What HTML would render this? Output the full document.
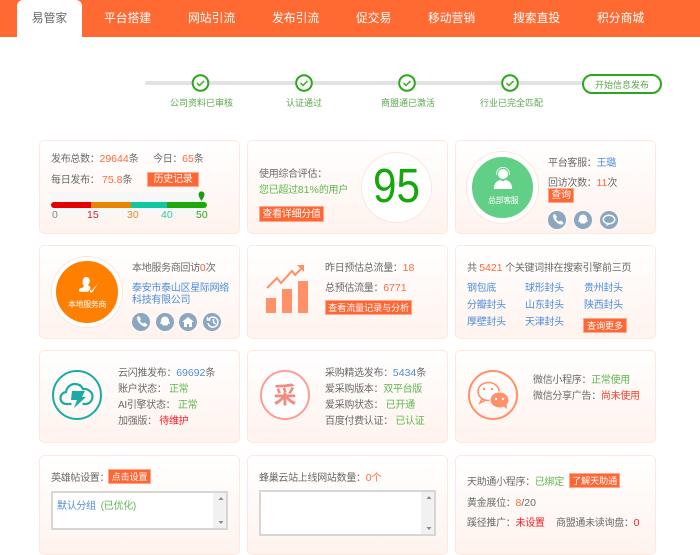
<!DOCTYPE html>
<html lang="zh">
<head>
<meta charset="utf-8">
<style>
html,body{margin:0;padding:0;background:#fff}
body{width:700px;height:536px;overflow:hidden;position:relative;font-family:"Liberation Sans","Noto Sans CJK SC",sans-serif;font-size:10px;letter-spacing:-.3px;color:#6a6a6a}
.t{position:absolute;white-space:nowrap;line-height:14px;margin-top:2px}
.t.n{margin-top:1px}
.n{font-size:10.5px;letter-spacing:0;line-height:1}
.nav{position:absolute;left:0;top:0;width:700px;height:37px;background:#ff6a33}
.tab{position:absolute;top:0;height:37px;line-height:37px;color:#fff;font-size:11.8px;letter-spacing:0;white-space:nowrap}
.act{position:absolute;left:17px;top:0;width:65px;height:37px;background:#fff;border-radius:6px 6px 0 0;color:#666;text-align:center;line-height:37px;font-size:11.8px;letter-spacing:0}
.card{position:absolute;width:201px;box-sizing:border-box;border:1px solid #fbe9e1;border-radius:5px;background:linear-gradient(#fff,#fff3ee)}
.o{color:#ff6a3c}.b{color:#4b8ddc}.g{color:#5db84f}.r{color:#f5202a}
.btn{position:absolute;background:#ff6633;color:#fff;text-align:center;white-space:nowrap;font-size:10px;border:1px solid #ffa98a;box-sizing:border-box;padding-top:1px}
.s9{font-size:9.2px;letter-spacing:-.2px}
.lab{position:absolute;top:97px;color:#5aa84a;font-size:9px;letter-spacing:0;line-height:13px;white-space:nowrap}
.ic{position:absolute;width:18px;height:18px;border-radius:50%;background:#8aa6c1}
svg{position:absolute;display:block}
.sb{position:absolute;box-sizing:border-box;border:2px solid #d6d6d6;background:#fff}
.sb i{position:absolute;right:0;top:0;bottom:0;width:13px;background:#f1f1f1}
</style>
</head>
<body>
<div class="nav"></div>
<div class="act">易管家</div>
<span class="tab" style="left:104px">平台搭建</span>
<span class="tab" style="left:188px">网站引流</span>
<span class="tab" style="left:272px">发布引流</span>
<span class="tab" style="left:356px">促交易</span>
<span class="tab" style="left:428px">移动营销</span>
<span class="tab" style="left:513px">搜索直投</span>
<span class="tab" style="left:597px">积分商城</span>

<div style="position:absolute;left:145px;top:81px;width:450px;height:4px;background:#e2e2e2;border-radius:2px"></div>
<svg width="700" height="110" style="left:0;top:0" viewBox="0 0 700 110">
<g fill="#fff" stroke="#2ba71a" stroke-width="2"><circle cx="200.500" cy="83" r="7.800"/><circle cx="304" cy="83" r="7.800"/><circle cx="407" cy="83" r="7.800"/><circle cx="510" cy="83" r="7.800"/></g>
<g fill="none" stroke="#4fae3a" stroke-width="1.600"><path d="M197 83l2.500 2.500 4.500-4.500"/><path d="M300.500 83l2.500 2.500 4.500-4.500"/><path d="M403.500 83l2.500 2.500 4.500-4.500"/><path d="M506.500 83l2.500 2.500 4.500-4.500"/></g>
<rect x="583" y="75" width="78" height="18" rx="9" fill="#fff" stroke="#2ba71a" stroke-width="2"/>
</svg>
<span class="lab" style="left:170px">公司资料已审核</span>
<span class="lab" style="left:286px">认证通过</span>
<span class="lab" style="left:381px">商盟通已激活</span>
<span class="lab" style="left:480px">行业已完全匹配</span>
<span class="lab" style="left:595px;top:79px">开始信息发布</span>

<!-- row 1 -->
<div class="card" style="left:39px;top:140px;height:94px"></div>
<span class="t" style="left:51px;top:151px">发布总数：<span class="o n">29644</span>条</span>
<span class="t" style="left:153px;top:151px">今日：<span class="o n">65</span>条</span>
<span class="t" style="left:51px;top:172px">每日发布： <span class="o n">75.8</span>条</span>
<div class="btn" style="left:147px;top:172px;width:52px;height:15px;line-height:12px">历史记录</div>
<div style="position:absolute;left:51px;top:192px;width:156px;height:25px;background:#f7f7f7"></div>
<div style="position:absolute;left:51px;top:202px;width:156px;height:6px;border-radius:3px;overflow:hidden;background:linear-gradient(90deg,#e50000 0,#e50000 40px,#e98400 40px,#e98400 80px,#10c8a0 80px,#10c8a0 116px,#1ea80a 116px)"></div>
<svg width="7" height="10" style="left:198px;top:191px" viewBox="0 0 8 12"><path d="M4 12C2 8.500 .5 6.500 .5 4a3.500 3.500 0 0 1 7 0C7.500 6.500 6 8.500 4 12z" fill="#1f9a0c"/></svg>
<span class="t n" style="left:52px;top:207px;line-height:14px;color:#888">0</span>
<span class="t n" style="left:87px;top:207px;line-height:14px;color:#d8202a">15</span>
<span class="t n" style="left:127px;top:207px;line-height:14px;color:#ee8a20">30</span>
<span class="t n" style="left:161px;top:207px;line-height:14px;color:#35c8a5">40</span>
<span class="t n" style="left:196px;top:207px;line-height:14px;color:#2ba71a">50</span>

<div class="card" style="left:247px;top:140px;height:94px"></div>
<span class="t" style="left:259px;top:166px">使用综合评估：</span>
<span class="t g" style="left:259px;top:182px">您已超过<span class="n">81%</span>的用户</span>
<div class="btn" style="left:259px;top:206px;width:65px;height:16px;line-height:13px">查看详细分值</div>
<div style="position:absolute;left:361px;top:152px;width:71px;height:71px;box-sizing:border-box;border:1px solid #fbe6dd;border-radius:50%;background:#fff"></div>
<span class="t" style="left:373px;top:160px;margin-top:0;font-size:48px;letter-spacing:0;line-height:54px;color:#14a80c;transform:scaleX(.88);transform-origin:0 0">95</span>

<div class="card" style="left:455px;top:140px;height:94px"></div>
<div style="position:absolute;left:467px;top:152px;width:71px;height:71px;box-sizing:border-box;border:5px solid #fff;box-shadow:0 0 0 1px #fbe6dd;border-radius:50%;background:#62cf87"></div>
<svg width="20" height="24" style="left:493px;top:167px" viewBox="0 0 24 28"><circle cx="12" cy="8" r="6" fill="#fff"/><path d="M4.500 9V7a7.500 7 0 0 1 15 0v2" fill="none" stroke="#fff" stroke-width="1"/><path d="M1 26c0-8 5-10 8-11l3 2 3-2c3 1 8 3 8 11z" fill="#fff"/></svg>
<span class="t" style="left:488px;top:192px;color:#fff;font-size:8px;letter-spacing:-.4px">总部客服</span>
<span class="t" style="left:548px;top:155px">平台客服：<span class="b">王璐</span></span>
<span class="t" style="left:548px;top:175px">回访次数：<span class="o n">11</span>次</span>
<div class="btn" style="left:548px;top:188px;width:26px;height:15px;line-height:12px">查询</div>
<div class="ic" style="left:548px;top:211px"></div>
<div class="ic" style="left:574px;top:211px"></div>
<div class="ic" style="left:600px;top:211px"></div>
<svg width="80" height="18" style="left:548px;top:211px" viewBox="0 0 80 18" fill="#fff"><path d="M5 4l2-1 2 3-1 1.500c.5 1.500 1.500 2.500 3 3l1.500-1 3 2-1 2c-4 1-10-5-9.500-9.500z"/><path d="M31 3.500c2.500 0 4 2 4 4.500l1 3-1.500-.5c-.5 1-1 1.500-1.500 2h-4c-.5-.5-1-1-1.500-2l-1.500.5 1-3c0-2.500 1.500-4.500 4-4.500z" transform="translate(4 0)"/><path fill-rule="evenodd" d="M61 3.500c3.500 0 6.500 2.300 6.500 5s-3 5-6.500 5l-3 1.500.5-2c-2.500-.8-4-2.500-4-4.500 0-2.700 3-5 6.500-5zm0 1.500c-2.700 0-5 1.600-5 3.500s2.300 3.500 5 3.500 5-1.600 5-3.500-2.300-3.500-5-3.500z"/></svg>

<!-- row 2 -->
<div class="card" style="left:39px;top:245px;height:94px"></div>
<div style="position:absolute;left:52px;top:257px;width:70px;height:70px;box-sizing:border-box;border:4px solid #fff;box-shadow:0 0 0 1px #fbe6dd;border-radius:50%;background:#ff7f00"></div>
<svg width="22" height="21" style="left:78px;top:275px" viewBox="0 0 28 24" fill="#fff"><path d="M10 1c3 0 5 2 5 5 0 2-1 4-2 5 0 1 1 2 2 2l1 2-3 5H2c-1-1-1-3 0-4l5-2c1-1 0-2-1-4-1-4 1-9 4-9z"/><path d="M14 15l3 4 8-9-7 11-2 0z"/></svg>
<span class="t" style="left:68px;top:296px;color:#fff;font-size:8px;letter-spacing:-.4px">本地服务商</span>
<span class="t" style="left:132px;top:260px">本地服务商回访<span class="n" style="color:#ff5a4a">0</span>次</span>
<span class="t b" style="left:132px;top:280px">泰安市泰山区星际网络</span>
<span class="t b" style="left:132px;top:292px">科技有限公司</span>
<div class="ic" style="left:132px;top:313px"></div>
<div class="ic" style="left:156px;top:313px"></div>
<div class="ic" style="left:179px;top:313px"></div>
<div class="ic" style="left:203px;top:313px"></div>
<svg width="90" height="18" style="left:132px;top:313px" viewBox="0 0 90 18" fill="#fff"><path d="M5 4l2-1 2 3-1 1.500c.5 1.500 1.500 2.500 3 3l1.500-1 3 2-1 2c-4 1-10-5-9.500-9.500z"/><path d="M33 3.500c2.500 0 4 2 4 4.500l1 3-1.500-.5c-.5 1-1 1.500-1.500 2h-4c-.5-.5-1-1-1.500-2l-1.500.5 1-3c0-2.500 1.500-4.500 4-4.500z"/><path d="M56 4l-6 5h2v5h3v-3h2v3h3V9h2z"/><path fill="none" stroke="#fff" stroke-width="1.500" d="M77 6a5 5 0 1 1-1 4M81.500 6v3.500l2.500 1.500M75.500 4v3h3"/></svg>

<div class="card" style="left:247px;top:245px;height:94px"></div>
<svg width="50" height="55" style="left:260px;top:260px" viewBox="0 0 50 55" fill="#ff9068"><rect x="6" y="38" width="10" height="15"/><rect x="22" y="29" width="10" height="24"/><rect x="38" y="21" width="10" height="32"/><path d="M7 28L17 18l4 5L32 11l3 4 8-8" fill="none" stroke="#ff9068" stroke-width="2"/><path d="M37 5h7v7z"/></svg>
<span class="t" style="left:325px;top:260px">昨日预估总流量：<span class="o n">18</span></span>
<span class="t" style="left:325px;top:280px">总预估流量：<span class="o n">6771</span></span>
<div class="btn s9" style="left:325px;top:300px;width:87px;height:15px;line-height:12px">查看流量记录与分析</div>

<div class="card" style="left:455px;top:245px;height:94px"></div>
<span class="t" style="left:467px;top:260px">共 <span class="o n">5421</span> 个关键词排在搜索引擎前三页</span>
<span class="t b" style="left:467px;top:280px">钢包底</span>
<span class="t b" style="left:525px;top:280px">球形封头</span>
<span class="t b" style="left:584px;top:280px">贵州封头</span>
<span class="t b" style="left:467px;top:297px">分瓣封头</span>
<span class="t b" style="left:525px;top:297px">山东封头</span>
<span class="t b" style="left:584px;top:297px">陕西封头</span>
<span class="t b" style="left:467px;top:314px">厚壁封头</span>
<span class="t b" style="left:525px;top:314px">天津封头</span>
<div class="btn s9" style="left:583px;top:318px;width:44px;height:15px;line-height:12px">查询更多</div>

<!-- row 3 -->
<div class="card" style="left:39px;top:350px;height:93px"></div>
<svg width="50" height="50" style="left:52px;top:370px" viewBox="0 0 50 50"><circle cx="25" cy="25" r="24" fill="none" stroke="#17ada5" stroke-width="2"/><path d="M18 33h-5c-3.500 0-6-2.500-6-6s2.500-5.500 5.500-6c.5-4.500 4.500-8 9-8 3.500 0 6.500 2 8 5 5-.5 9.500 3 9.500 7.500 0 4-3 7.500-7 7.500h-3" fill="none" stroke="#17ada5" stroke-width="2.200" transform="translate(1.500 1)"/><path d="M20 21h13l-3 6h4L22 38l3-8h-6z" fill="#17ada5"/></svg>
<span class="t" style="left:118px;top:365px">云闪推发布：<span class="b n">69692</span>条</span>
<span class="t" style="left:118px;top:381px">账户状态： <span class="g">正常</span></span>
<span class="t" style="left:118px;top:397px">AI引擎状态： <span class="g">正常</span></span>
<span class="t" style="left:118px;top:413px">加强版： <span class="r">待维护</span></span>

<div class="card" style="left:247px;top:350px;height:93px"></div>
<div style="position:absolute;left:260px;top:370px;width:50px;height:50px;box-sizing:border-box;border:2px solid #ff9c96;border-radius:50%;background:#fff;color:#f58a80;font-size:23px;letter-spacing:0;line-height:46px;text-align:center;font-weight:bold">采</div>
<span class="t" style="left:325px;top:365px">采购精选发布：<span class="b n">5434</span>条</span>
<span class="t" style="left:325px;top:381px">爱采购版本：<span class="g">双平台版</span></span>
<span class="t" style="left:325px;top:397px">爱采购状态： <span class="g">已开通</span></span>
<span class="t" style="left:325px;top:413px">百度付费认证： <span class="g">已认证</span></span>

<div class="card" style="left:455px;top:350px;height:93px"></div>
<svg width="50" height="50" style="left:468px;top:370px" viewBox="0 0 50 50"><circle cx="25" cy="25" r="24" fill="none" stroke="#ff9068" stroke-width="2"/><path d="M14 29l-2 4 5-2.500z" fill="#fff" stroke="#ff9068" stroke-width="1.500"/><ellipse cx="20.500" cy="21.500" rx="10.500" ry="9" fill="#fff" stroke="#ff9068" stroke-width="1.600"/><ellipse cx="31.500" cy="30" rx="9.500" ry="8" fill="#ff9068" stroke="#fff" stroke-width="1"/><path d="M35 36l4 3-.5-5z" fill="#ff9068"/><circle cx="16" cy="19" r="1.200" fill="#ff9068"/><circle cx="24" cy="19" r="1.200" fill="#ff9068"/><circle cx="28" cy="29" r="1.200" fill="#fff"/><circle cx="35" cy="29" r="1.200" fill="#fff"/></svg>
<span class="t" style="left:533px;top:372px">微信小程序：<span class="g">正常使用</span></span>
<span class="t" style="left:533px;top:388px">微信分享广告：<span class="r" style="color:#f5402a">尚未使用</span></span>

<!-- row 4 -->
<div class="card" style="left:39px;top:455px;height:100px"></div>
<span class="t" style="left:51px;top:470px">英雄帖设置：</span>
<div class="btn s9" style="left:108px;top:469px;width:43px;height:15px;line-height:12px">点击设置</div>
<div class="sb" style="left:51px;top:491px;width:177px;height:39px"><i></i></div>
<span class="t" style="left:57px;top:498px"><span class="b">默认分组</span>&nbsp; <span class="g">(已优化)</span></span>
<svg width="14" height="39" style="left:214px;top:491px" viewBox="0 0 14 39" fill="#8a8a8a"><path d="M7 6l2.500 3h-5zM7 33l2.500-3h-5z"/></svg>

<div class="card" style="left:247px;top:455px;height:100px"></div>
<span class="t" style="left:259px;top:470px">蜂巢云站上线网站数量：<span class="o n">0</span><span class="o">个</span></span>
<div class="sb" style="left:259px;top:490px;width:177px;height:46px"><i></i></div>
<svg width="14" height="46" style="left:422px;top:490px" viewBox="0 0 14 46" fill="#8a8a8a"><path d="M7 6l2.500 3h-5zM7 40l2.500-3h-5z"/></svg>

<div class="card" style="left:455px;top:455px;height:100px"></div>
<span class="t" style="left:467px;top:474px">天助通小程序：<span class="g">已绑定</span></span>
<div class="btn s9" style="left:569px;top:473px;width:51px;height:15px;line-height:12px">了解天助通</div>
<span class="t" style="left:467px;top:495px">黄金展位：<span class="o n">8</span><span class="n">/20</span></span>
<span class="t" style="left:467px;top:515px">蹊径推广：<span class="r">未设置</span></span>
<span class="t" style="left:556px;top:515px">商盟通未读询盘：<span class="r n">0</span></span>
</body>
</html>
